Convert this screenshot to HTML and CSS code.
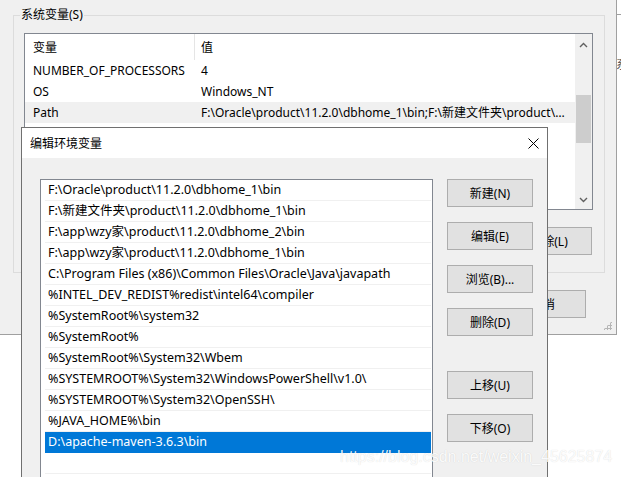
FILE: index.html
```html
<!DOCTYPE html>
<html lang="zh-CN">
<head>
    <meta charset="UTF-8">
    <title>编辑环境变量</title>
    <link rel="stylesheet" href="styles.css">
</head>
<body>
    <div class="desktop">
        <!-- Background: system properties window -->
        <div class="sys-window">
            <fieldset class="group">
                <legend>系统变量(S)</legend>
                <div class="var-list">
                    <div class="var-table">
                        <div class="var-row head"><span class="col-name">变量</span><span class="col-value">值</span></div>
                        <div class="var-row"><span class="col-name">NUMBER_OF_PROCESSORS</span><span class="col-value">4</span></div>
                        <div class="var-row"><span class="col-name">OS</span><span class="col-value">Windows_NT</span></div>
                        <div class="var-row current"><span class="col-name">Path</span><span class="col-value">F:\Oracle\product\11.2.0\dbhome_1\bin;F:\新建文件夹\product\11.2.0\dbhome_1\bin</span></div>
                    </div>
                    <div class="scrollbar">
                        <svg class="arrow" width="9" height="6" viewBox="0 0 9 6"><path d="M1 5 L4.5 1.5 L8 5" fill="none" stroke="#606060" stroke-width="1.4"/></svg>
                        <div class="thumb"></div>
                        <svg class="arrow down" width="9" height="6" viewBox="0 0 9 6"><path d="M1 1 L4.5 4.5 L8 1" fill="none" stroke="#606060" stroke-width="1.4"/></svg>
                    </div>
                </div>
                <div class="group-buttons">
                    <button class="btn">新建(W)...</button>
                    <button class="btn">编辑(I)...</button>
                    <button class="btn">删除(L)</button>
                </div>
            </fieldset>
            <div class="footer-buttons">
                <button class="btn">确定</button>
                <button class="btn">取消</button>
            </div>
            <span class="grip"></span>
        </div>
        <div class="edge-window"><span>系</span></div>

        <!-- Foreground: edit environment variable dialog -->
        <div class="dialog">
            <div class="title-bar">
                <span class="title">编辑环境变量</span>
                <svg class="close" width="11" height="11" viewBox="0 0 11 11"><path d="M0.5 0.5 L10.5 10.5 M10.5 0.5 L0.5 10.5" stroke="#000" stroke-width="1"/></svg>
            </div>
            <div class="dialog-body">
                <ul class="path-list">
                    <li>F:\Oracle\product\11.2.0\dbhome_1\bin</li>
                    <li>F:\新建文件夹\product\11.2.0\dbhome_1\bin</li>
                    <li>F:\app\wzy家\product\11.2.0\dbhome_2\bin</li>
                    <li>F:\app\wzy家\product\11.2.0\dbhome_1\bin</li>
                    <li>C:\Program Files (x86)\Common Files\Oracle\Java\javapath</li>
                    <li>%INTEL_DEV_REDIST%redist\intel64\compiler</li>
                    <li>%SystemRoot%\system32</li>
                    <li>%SystemRoot%</li>
                    <li>%SystemRoot%\System32\Wbem</li>
                    <li>%SYSTEMROOT%\System32\WindowsPowerShell\v1.0\</li>
                    <li>%SYSTEMROOT%\System32\OpenSSH\</li>
                    <li>%JAVA_HOME%\bin</li>
                    <li class="selected">D:\apache-maven-3.6.3\bin</li>
                    <li></li>
                </ul>
                <div class="side-buttons">
                    <button class="btn">新建(N)</button>
                    <button class="btn">编辑(E)</button>
                    <button class="btn">浏览(B)...</button>
                    <button class="btn">删除(D)</button>
                    <button class="btn move">上移(U)</button>
                    <button class="btn">下移(O)</button>
                </div>
            </div>
        </div>

        <div class="watermark">https://blog.csdn.net/weixin_45625874</div>
    </div>
</body>
</html>
```

FILE: styles.css
```css
/* General */
* {
    margin: 0;
    padding: 0;
    box-sizing: border-box;
}

body {
    font-family: "Noto Sans", "Noto Sans CJK SC", sans-serif;
    font-size: 12px;
    color: #000;
    background: #fff;
}

.desktop {
    position: relative;
    width: 621px;
    height: 477px;
    overflow: hidden;
}

.btn {
    display: block;
    width: 86px;
    height: 28px;
    background: #e1e1e1;
    border: 1px solid #adadad;
    font-family: inherit;
    font-size: 12px;
    color: #000;
}

/* Background window */
.sys-window {
    position: relative;
    width: 617px;
    height: 335px;
    background: #f0f0f0;
    border-right: 1px solid #a0a0a0;
    border-bottom: 1px solid #a0a0a0;
    padding-top: 7px;
}

.group {
    width: 592px;
    min-width: 0;
    margin-left: 13px;
    border: 1px solid #dcdcdc;
    padding: 10px 11px 17px 10px;
}

.group legend {
    margin-left: -4px;
    padding: 0 1px;
    line-height: 16px;
}

.var-list {
    display: flex;
    height: 177px;
    background: #fff;
    border: 1px solid #828790;
}

.var-table {
    flex: 1;
    min-width: 0;
    overflow: hidden;
}

.var-row {
    display: flex;
    height: 21px;
    line-height: 21px;
}

.var-row.head {
    height: 26px;
    line-height: 28px;
}

.var-row.current {
    background: #f0f0f0;
}

.col-name {
    width: 170px;
    padding-left: 8px;
    flex-shrink: 0;
    white-space: nowrap;
}

.head .col-name {
    border-right: 1px solid #e5e5e5;
}

.col-value {
    flex: 1;
    min-width: 0;
    padding-left: 6px;
    padding-right: 6px;
    white-space: nowrap;
    overflow: hidden;
    text-overflow: ellipsis;
}

.scrollbar {
    width: 17px;
    flex-shrink: 0;
    background: #f0f0f0;
}

.scrollbar .arrow {
    display: block;
    margin: 8px auto 0;
}

.scrollbar .thumb {
    width: 15px;
    height: 48px;
    margin: 47px auto 0;
    background: #cdcdcd;
}

.scrollbar .arrow.down {
    margin-top: 54px;
}

.group-buttons {
    display: flex;
    justify-content: flex-end;
    gap: 9px;
    margin-top: 17px;
    padding-right: 1px;
}

.footer-buttons {
    display: flex;
    justify-content: flex-end;
    gap: 9px;
    margin-top: 17px;
    padding-right: 30px;
}

.grip {
    position: absolute;
    right: 4px;
    bottom: 4px;
    width: 9px;
    height: 9px;
    background-image: radial-gradient(circle, #b5b5b5 1px, transparent 1.2px);
    background-size: 3px 3px;
    clip-path: polygon(100% 0, 100% 100%, 0 100%);
}

.edge-window {
    position: absolute;
    left: 617px;
    top: 14px;
    width: 4px;
    height: 60px;
    border-top: 1px solid #a0a0a0;
    overflow: hidden;
}

.edge-window span {
    display: block;
    margin-top: 40px;
    margin-left: -1px;
    color: #555;
}

/* Dialog */
.dialog {
    position: absolute;
    left: 21px;
    top: 127px;
    width: 527px;
    height: 380px;
    background: #f0f0f0;
    border: 1px solid #707070;
}

.title-bar {
    display: flex;
    align-items: center;
    justify-content: space-between;
    height: 30px;
    background: #fff;
    padding: 0 8px 0 8px;
}

.dialog-body {
    display: flex;
    gap: 14px;
    padding: 21px 13px 0 18px;
}

.path-list {
    list-style: none;
    width: 393px;
    height: 320px;
    background: #fff;
    border: 1px solid #828790;
    padding: 0 1px 0 4px;
    font-size: 12.5px;
}

.path-list li {
    height: 21px;
    line-height: 20px;
    padding-left: 3px;
    border-bottom: 1px solid #f0f0f0;
    white-space: nowrap;
}

.path-list li.selected {
    background: #0078d7;
    color: #fff;
    border-bottom-color: #0078d7;
}

.side-buttons {
    display: flex;
    flex-direction: column;
    gap: 15px;
}

.side-buttons .move {
    margin-top: 20px;
}

.watermark {
    position: absolute;
    left: 340px;
    top: 448px;
    font-family: "Liberation Sans", Arial, sans-serif;
    font-size: 16px;
    color: rgba(255, 255, 255, 0.92);
    text-shadow: 0 0 1px rgba(0, 0, 0, 0.16);
    white-space: nowrap;
}
```
